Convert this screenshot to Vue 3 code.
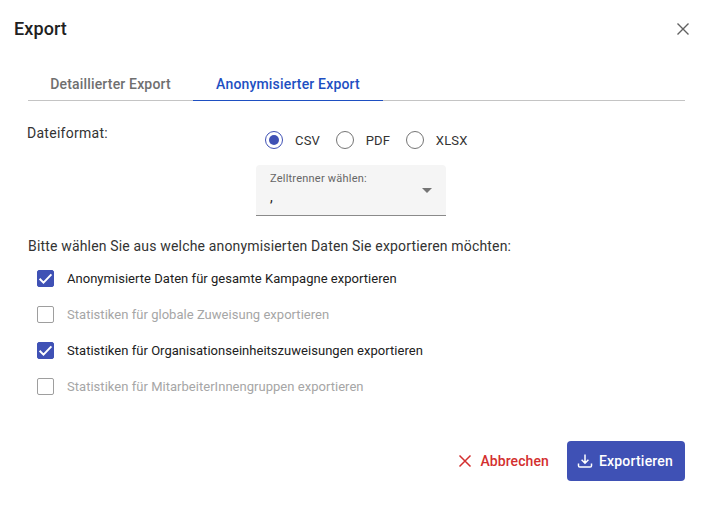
<template>
  <div class="dialog">
    <header class="head">
      <h2 class="title">Export</h2>
      <button class="close" aria-label="Schließen">
        <svg width="14" height="14" viewBox="0 0 14 14"><path d="M1.5 1.5l11 11M12.5 1.5l-11 11" stroke="#616161" stroke-width="1.4" fill="none" /></svg>
      </button>
    </header>

    <nav class="tabs">
      <div class="tab">Detaillierter Export</div>
      <div class="tab active">Anonymisierter Export</div>
    </nav>

    <section class="format">
      <div class="format-label">Dateiformat:</div>
      <div class="format-opts">
        <div class="radios">
          <label v-for="f in formats" :key="f" class="radio">
            <span class="radio-dot" :class="{ on: f === 'CSV' }"></span>
            <span>{{ f }}</span>
          </label>
        </div>
        <div class="select">
          <div class="select-label">Zelltrenner wählen:</div>
          <div class="select-value">,</div>
          <span class="select-arrow"></span>
        </div>
      </div>
    </section>

    <p class="question">Bitte wählen Sie aus welche anonymisierten Daten Sie exportieren möchten:</p>

    <ul class="checks">
      <li v-for="item in items" :key="item.text" class="check" :class="{ off: !item.checked }">
        <span class="box" :class="{ on: item.checked }">
          <svg v-if="item.checked" width="17" height="17" viewBox="0 0 17 17"><path d="M2.6 8.8l3.9 3.8 7.9-8.2" stroke="#fff" stroke-width="2" fill="none" /></svg>
        </span>
        <span>{{ item.text }}</span>
      </li>
    </ul>

    <footer class="actions">
      <button class="btn-cancel">
        <svg width="14" height="14" viewBox="0 0 14 14"><path d="M1.5 1.5l11 11M12.5 1.5l-11 11" stroke="#d32f2f" stroke-width="1.5" fill="none" /></svg>
        Abbrechen
      </button>
      <button class="btn-export">
        <svg width="16" height="16" viewBox="0 0 16 16"><path d="M8 1.5v8.5M4.6 6.8L8 10.2l3.4-3.4M1.5 10.5v2.2c0 .7.6 1.3 1.3 1.3h10.4c.7 0 1.3-.6 1.3-1.3v-2.2" stroke="#fff" stroke-width="1.5" fill="none" /></svg>
        Exportieren
      </button>
    </footer>
  </div>
</template>

<script setup>
const formats = ['CSV', 'PDF', 'XLSX']

const items = [
  { text: 'Anonymisierte Daten für gesamte Kampagne exportieren', checked: true },
  { text: 'Statistiken für globale Zuweisung exportieren', checked: false },
  { text: 'Statistiken für Organisationseinheitszuweisungen exportieren', checked: true },
  { text: 'Statistiken für MitarbeiterInnengruppen exportieren', checked: false },
]
</script>

<style>
html,
body {
  margin: 0;
  background: #fff;
}
</style>

<style scoped>
.dialog {
  width: 712px;
  height: 506px;
  box-sizing: border-box;
  padding: 0 27px 0 14px;
  font-family: Roboto, "Liberation Sans", sans-serif;
  color: #212121;
  display: flex;
  flex-direction: column;
}

.head {
  display: flex;
  justify-content: space-between;
  align-items: center;
  height: 57px;
  margin-right: -5px;
}

.title {
  margin: 0;
  font-size: 18px;
  font-weight: 500;
  letter-spacing: 0.1px;
}

.close {
  border: 0;
  background: none;
  padding: 0;
  width: 14px;
  height: 14px;
  display: flex;
  margin-top: 1px;
}

.tabs {
  display: flex;
  margin: 10px 0 0 14px;
  height: 33px;
  border-bottom: 1px solid #c4c4c4;
}

.tab {
  width: 165px;
  text-align: center;
  font-size: 14px;
  font-weight: 500;
  line-height: 35px;
  color: #6f6f6f;
  letter-spacing: 0.17px;
  height: 33px;
  box-sizing: border-box;
}

.tab.active {
  width: 190px;
  color: #1e4fc2;
  border-bottom: 1px solid #1e4fc2;
  height: 34px;
}

.format {
  display: flex;
  margin: 22px 0 0 13px;
}

.format-label {
  width: 229px;
  font-size: 14px;
  line-height: 20px;
  color: #333;
  letter-spacing: 0.27px;
}

.format-opts {
  display: flex;
  flex-direction: column;
}

.radios {
  display: flex;
  margin: 7px 0 0 9px;
  gap: 15.6px;
  height: 20px;
}

.radio {
  display: flex;
  align-items: center;
  gap: 12px;
  font-size: 13px;
  letter-spacing: 0.2px;
  color: #333;
}

.radio-dot {
  width: 18px;
  height: 18px;
  border-radius: 50%;
  border: 1px solid #757575;
  box-sizing: border-box;
  position: relative;
}

.radio-dot.on {
  border-color: #3f51b5;
}

.radio-dot.on::after {
  content: "";
  position: absolute;
  inset: 3px;
  border-radius: 50%;
  background: #3f51b5;
}

.select {
  position: relative;
  width: 190px;
  height: 51px;
  margin-top: 15px;
  box-sizing: border-box;
  background: #f5f5f5;
  border-bottom: 1px solid #8a8a8a;
  border-radius: 4px 4px 0 0;
  padding: 7px 14px 0;
}

.select-label {
  font-size: 11px;
  line-height: 14px;
  color: #666;
  letter-spacing: 0.22px;
}

.select-value {
  font-size: 14px;
  line-height: 22px;
  color: #212121;
}

.select-arrow {
  position: absolute;
  right: 14px;
  top: 23px;
  border-left: 5px solid transparent;
  border-right: 5px solid transparent;
  border-top: 5px solid #757575;
}

.question {
  margin: 20px 0 0 14px;
  font-size: 14px;
  line-height: 20px;
  color: #333;
  letter-spacing: 0.17px;
}

.checks {
  list-style: none;
  margin: 4px 0 0 23px;
  padding: 0;
}

.check {
  display: flex;
  align-items: center;
  gap: 13px;
  height: 36px;
  font-size: 13px;
  letter-spacing: 0.03px;
  color: #212121;
}

.check.off {
  color: #a6a6a6;
}

.box {
  width: 17px;
  height: 17px;
  box-sizing: border-box;
  border: 1px solid #9e9e9e;
  border-radius: 2px;
  display: flex;
  align-items: center;
  justify-content: center;
}

.box.on {
  background: #3f51b5;
  border-color: #3f51b5;
}

.box svg {
  flex: none;
}

.actions {
  display: flex;
  justify-content: flex-end;
  align-items: center;
  gap: 18px;
  margin-top: 37px;
}

.actions button {
  display: flex;
  align-items: center;
  font-family: inherit;
  font-size: 14px;
  font-weight: 500;
  letter-spacing: 0.1px;
  border: 0;
  padding: 0;
}

.btn-cancel {
  background: none;
  color: #d32f2f;
  gap: 8px;
}

.actions .btn-export {
  background: #3f51b5;
  color: #fff;
  height: 40px;
  width: 118px;
  justify-content: center;
  gap: 6px;
  border-radius: 4px;
  padding-right: 2px;
  letter-spacing: 0.2px;
}
</style>
